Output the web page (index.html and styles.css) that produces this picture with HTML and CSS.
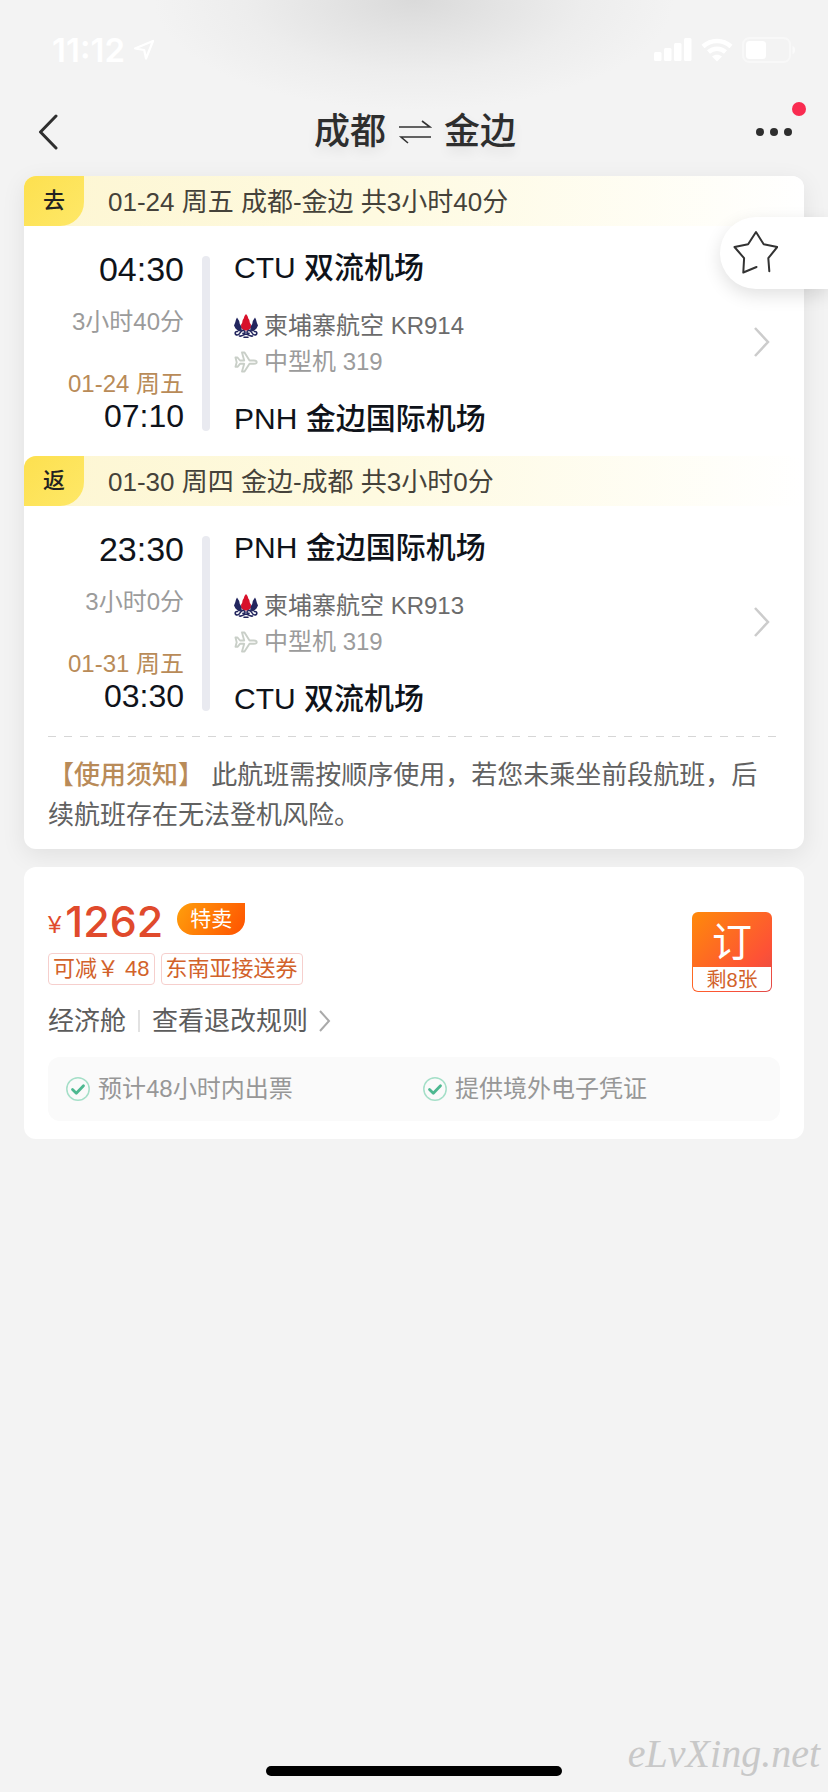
FILE: index.html
```html
<!DOCTYPE html>
<html lang="zh-CN">
<head>
<meta charset="utf-8">
<meta name="viewport" content="width=device-width">
<title>成都 - 金边</title>
<link rel="stylesheet" href="styles.css">
</head>
<body>
<svg class="defs" width="0" height="0" aria-hidden="true">
  <symbol id="airline" viewBox="0 0 24 24">
    <path fill="#d8102a" d="M12 0l1.500 2 .8 2.400 1 1.600.6 3 1 1.500v3.500L14 16.500h-4L7.100 14v-3.500l1-1.500.6-3 1-1.600L10.500 2z"/>
    <path fill="#23265f" d="M3 3.500L5.200 7l.6 3 1.300 2 .8 4.500-3 1L1.500 14.500 0 11.500 1.200 8.500 2 5.500zM21 3.500L18.800 7l-.6 3-1.300 2-.8 4.500 3 1 3.400-3 1.500-3-1.200-3L22 5.500z"/>
    <path fill="none" stroke="#23265f" stroke-width="1.600" stroke-linecap="round" d="M3.500 17.500c-3-.5-3 3.500-.3 3.500 3.800 0 2.500-5.500 6.300-4.500 2.500.8 1.500 3.500-.5 2.800M20.500 17.500c3-.5 3 3.500.3 3.500-3.800 0-2.500-5.500-6.300-4.500-2.500.8-1.500 3.500.5 2.800M5.500 22c3 .8 4-2 6.500-1.700 2.500-.3 3.500 2.500 6.500 1.700M10 23.200h4"/>
  </symbol>
  <symbol id="plane" viewBox="0 0 24 24">
    <path fill="none" stroke="#c9cfc8" stroke-width="1.900" stroke-linejoin="round" d="M1.500 7.500h2L6 10.500h4.200L8 2.500h2.500L15.500 10.500H20c3.600.3 3.600 3 0 3.300h-4.500L10.500 21.500H8l2.200-7.700H6l-2.500 3h-2l1.200-4.600z"/>
  </symbol>
  <symbol id="check" viewBox="0 0 24 24">
    <circle cx="12" cy="12" r="11.200" fill="none" stroke="#a5dfc8" stroke-width="1.500"/>
    <path fill="none" stroke="#4db890" stroke-width="2.800" stroke-linecap="round" stroke-linejoin="round" d="M6.500 12.500l3.800 3.800 7.200-7.600"/>
  </symbol>
</svg>

<header class="top">
  <div class="status">
    <div class="status-time">
      <span>11:12</span>
      <svg width="22" height="22" viewBox="0 0 22 22"><path fill="none" stroke="#fff" stroke-width="2.200" stroke-linejoin="round" d="M2 9.500L20 2l-7 17.500-1.800-8.500z"/></svg>
    </div>
    <div class="status-icons">
      <svg width="38" height="24" viewBox="0 0 38 24" fill="#fff"><rect y="14" width="7.500" height="9" rx="1.500"/><rect x="10" y="10" width="7.500" height="13" rx="1.500"/><rect x="20" y="5" width="7.500" height="18" rx="1.500"/><rect x="30" width="7.500" height="23" rx="1.500"/></svg>
      <svg width="32" height="24" viewBox="0 0 32 24" fill="none" stroke="#fff" stroke-width="4.500"><path d="M2 8.500c8-7.500 20-7.500 28 0M7.500 14c5-4.500 12-4.500 17 0"/><path fill="#fff" stroke="none" d="M16 23.500l-5-5c3-2.500 7-2.500 10 0z"/></svg>
      <svg width="54" height="26" viewBox="0 0 54 26"><rect x="1" y="1" width="47" height="24" rx="6.500" fill="none" stroke="#f8f8f8" stroke-width="2"/><rect x="4" y="4" width="20" height="18" rx="3.500" fill="#fff"/><path fill="#fafafa" d="M50.500 9c3.500 1 3.500 7 0 8z"/></svg>
    </div>
  </div>
  <nav class="nav">
    <button class="icon-button" aria-label="返回"><svg width="20" height="36" viewBox="0 0 20 36"><path fill="none" stroke="#2e2e2e" stroke-width="3" stroke-linecap="round" stroke-linejoin="round" d="M18 2L2.500 18 18 34"/></svg></button>
    <h1 class="title"><span>成都</span>
      <svg width="34" height="24" viewBox="0 0 34 24"><path fill="none" stroke="#333" stroke-width="1.600" d="M1 7h31L24 1M33 17H3l7 6"/></svg>
      <span>金边</span></h1>
    <button class="icon-button more" aria-label="更多"><svg width="36" height="8" viewBox="0 0 36 8" fill="#2e2e2e"><circle cx="4" cy="4" r="4"/><circle cx="18" cy="4" r="4"/><circle cx="32" cy="4" r="4"/></svg><span class="dot"></span></button>
  </nav>
</header>

<button class="favorite" aria-label="收藏"><svg width="46" height="46" viewBox="0 0 46 46"><path fill="none" stroke="#333" stroke-width="2" stroke-linecap="round" stroke-linejoin="round" d="M24.500 37L11.300 42.500l.8-14.300L2.500 17l13.600-2.700L24 2l7.700 12.300 13.600 2.700-9 11.200 1 13"/></svg></button>

<main class="content">
  <section class="card trip">
    <article>
      <h2 class="leg-head"><span class="tag">去</span><span class="summary">01-24 周五 成都-金边 共3小时40分</span></h2>
      <a class="leg" href="#outbound">
        <div class="times"><strong class="depart">04:30</strong><span class="duration">3小时40分</span><span class="date">01-24 周五</span><span class="arrive">07:10</span></div>
        <div class="rail"></div>
        <div class="places">
          <strong class="airport">CTU 双流机场</strong>
          <div class="flight"><p class="airline"><svg><use href="#airline"/></svg>柬埔寨航空 KR914</p><p class="plane"><svg><use href="#plane"/></svg>中型机 319</p></div>
          <strong class="airport">PNH 金边国际机场</strong>
        </div>
        <svg class="chevron" width="16" height="32" viewBox="0 0 16 32"><path fill="none" stroke="#ccc" stroke-width="2.500" d="M1 2l13 14L1 30"/></svg>
      </a>
    </article>
    <article>
      <h2 class="leg-head"><span class="tag">返</span><span class="summary">01-30 周四 金边-成都 共3小时0分</span></h2>
      <a class="leg" href="#return">
        <div class="times"><strong class="depart">23:30</strong><span class="duration">3小时0分</span><span class="date">01-31 周五</span><span class="arrive">03:30</span></div>
        <div class="rail"></div>
        <div class="places">
          <strong class="airport">PNH 金边国际机场</strong>
          <div class="flight"><p class="airline"><svg><use href="#airline"/></svg>柬埔寨航空 KR913</p><p class="plane"><svg><use href="#plane"/></svg>中型机 319</p></div>
          <strong class="airport">CTU 双流机场</strong>
        </div>
        <svg class="chevron" width="16" height="32" viewBox="0 0 16 32"><path fill="none" stroke="#ccc" stroke-width="2.500" d="M1 2l13 14L1 30"/></svg>
      </a>
    </article>
    <div class="divider"></div>
    <p class="notice"><strong>【使用须知】</strong> 此航班需按顺序使用，若您未乘坐前段航班，后续航班存在无法登机风险。</p>
  </section>

  <section class="card offer">
    <div class="offer-main">
      <div>
        <div class="price"><span class="currency">¥</span><span class="amount">1262</span><span class="sale">特卖</span></div>
        <div class="coupons"><span>可减￥ 48</span><span>东南亚接送券</span></div>
        <div class="cabin"><span>经济舱</span><i></i><a href="#rules">查看退改规则<svg width="12" height="22" viewBox="0 0 12 22"><path fill="none" stroke="#aaa" stroke-width="2" d="M1 1l9 10-9 10"/></svg></a></div>
      </div>
      <button class="book"><span class="book-label">订</span><span class="book-left">剩8张</span></button>
    </div>
    <ul class="services">
      <li><svg><use href="#check"/></svg>预计48小时内出票</li>
      <li><svg><use href="#check"/></svg>提供境外电子凭证</li>
    </ul>
  </section>
</main>

<footer class="bottom">
  <div class="home-bar"></div>
  <span class="watermark">eLvXing.net</span>
</footer>
</body>
</html>
```

FILE: styles.css
```css
* {
  box-sizing: border-box;
  margin: 0;
  padding: 0;
}

body {
  position: relative;
  display: flex;
  flex-direction: column;
  min-height: 100vh;
  background: #f3f3f3;
  color: #0f131a;
  font-family: "Liberation Sans", "Noto Sans CJK SC", sans-serif;
}

button {
  border: 0;
  background: none;
  font-family: inherit;
}

a {
  color: inherit;
  text-decoration: none;
}

.defs {
  position: absolute;
}

.top {
  background: radial-gradient(ellipse 260px 110px at 50% 0, #dadada 0%, #e3e3e3 30%, #ededed 65%, #f3f3f3 100%);
}

.status {
  display: flex;
  align-items: center;
  justify-content: space-between;
  height: 88px;
  padding: 12px 32px 0 52px;
  color: #fff;
}

.status-time {
  display: flex;
  align-items: center;
  gap: 8px;
  font: 600 33px/36px Inter, sans-serif;
}

.status-icons {
  display: flex;
  align-items: center;
  gap: 9px;
}

.nav {
  display: grid;
  grid-template-columns: 1fr auto 1fr;
  align-items: center;
  height: 88px;
  padding: 0 36px 0 38px;
}

.icon-button {
  display: flex;
  align-items: center;
  justify-self: start;
  height: 44px;
}

.more {
  position: relative;
  justify-self: end;
}

.dot {
  position: absolute;
  top: -8px;
  right: -14px;
  width: 14px;
  height: 14px;
  border-radius: 50%;
  background: #f92b50;
}

.title {
  display: flex;
  align-items: center;
  gap: 12px;
  color: #2e2e2e;
  font-size: 36px;
  font-weight: 500;
  line-height: 44px;
  text-shadow: 0 6px 12px rgba(0, 0, 0, 0.08);
}

.favorite {
  position: absolute;
  top: 217px;
  right: 0;
  width: 108px;
  height: 72px;
  padding: 0 0 0 12px;
  border-radius: 36px 0 0 36px;
  background: #fff;
  box-shadow: 0 6px 18px rgba(0, 0, 0, 0.12);
  text-align: left;
}

.favorite svg {
  display: block;
}

.content {
  display: flex;
  flex-direction: column;
  gap: 18px;
  padding: 0 24px;
}

.card {
  border-radius: 12px;
  background: #fff;
}

.trip {
  padding-bottom: 14px;
  box-shadow: 0 6px 24px rgba(0, 0, 0, 0.08);
}

.leg-head {
  display: flex;
  align-items: center;
  gap: 24px;
  height: 50px;
  border-radius: 12px 12px 0 0;
  background: linear-gradient(90deg, #fdf6d2 0%, #fefae0 45%, #fff 100%);
  color: #45423a;
  font-size: 26px;
  font-weight: 400;
  line-height: 50px;
}

.summary {
  padding-top: 2px;
}

.tag {
  width: 60px;
  border-radius: 12px 0 24px 0;
  background: linear-gradient(135deg, #fde04f, #fee868);
  color: #222;
  font-size: 22px;
  font-weight: 500;
  text-align: center;
}

.leg {
  display: grid;
  grid-template-columns: 160px 8px 1fr auto;
  column-gap: 18px;
  padding: 30px 34px 25px 0;
}

.times {
  display: flex;
  flex-direction: column;
  text-align: right;
  font-size: 24px;
}

.depart {
  font-size: 34px;
  font-weight: 400;
  line-height: 26px;
}

.duration {
  margin-top: 24px;
  color: #9b9b9b;
  line-height: 32px;
}

.date {
  margin-top: 31px;
  color: #b98b58;
  line-height: 30px;
}

.arrive {
  margin-top: 2px;
  font-size: 32px;
  line-height: 30px;
}

.rail {
  border-radius: 4px;
  background: #e9eaf0;
}

.places {
  display: flex;
  flex-direction: column;
  justify-content: space-between;
  padding-left: 6px;
}

.airport {
  font-size: 30px;
  font-weight: 500;
  line-height: 24px;
}

.flight {
  font-size: 24px;
  line-height: 36px;
}

.airline,
.plane {
  display: flex;
  align-items: center;
  gap: 6px;
}

.flight svg,
.services svg {
  width: 24px;
  height: 24px;
}

.airline {
  color: #6b6b6b;
}

.plane {
  color: #9b9b9b;
}

.chevron {
  align-self: center;
  margin-bottom: 4px;
}

.divider {
  height: 1px;
  margin: 0 24px 18px;
  background: repeating-linear-gradient(90deg, #d6d6d6 0 8px, transparent 8px 16px);
}

.notice {
  padding: 0 24px;
  color: #616161;
  font-size: 26px;
  line-height: 40px;
}

.notice strong {
  color: #b98b58;
  font-weight: 500;
}

.offer {
  padding: 24px 24px 18px;
}

.offer-main {
  display: flex;
  justify-content: space-between;
  padding-right: 8px;
}

.price {
  display: flex;
  align-items: center;
  height: 56px;
  color: #e04a2c;
}

.currency {
  padding-top: 12px;
  font-size: 24px;
  line-height: 32px;
}

.amount {
  margin: 0 14px 0 4px;
  padding-top: 4px;
  font: 500 43px/56px Inter, sans-serif;
}

.sale {
  width: 68px;
  border-radius: 16px 0 16px 16px;
  background: linear-gradient(120deg, #ff9f0c, #ff5200);
  color: #fff;
  font-size: 21px;
  line-height: 32px;
  text-align: center;
}

.coupons {
  display: flex;
  gap: 6px;
  margin-top: 6px;
  color: #d2622a;
  font-size: 22px;
  line-height: 30px;
}

.coupons span {
  padding: 0 4px;
  border: 1px solid #f6cfcd;
  border-radius: 4px;
}

.cabin {
  display: flex;
  align-items: center;
  gap: 12px;
  margin-top: 16px;
  color: #5c5c5c;
  font-size: 26px;
  line-height: 40px;
}

.cabin i {
  width: 2px;
  height: 22px;
  background: #e2e2e2;
}

.cabin a {
  display: flex;
  align-items: center;
  gap: 11px;
}

.book {
  display: flex;
  flex-direction: column;
  width: 80px;
  height: 80px;
  margin-top: 21px;
  padding: 0 1px 1px;
  border-radius: 6px;
  background: linear-gradient(135deg, #ff8a0a, #fd5236 70%, #e04a4a);
}

.book-label {
  width: 100%;
  height: 55px;
  color: #fff;
  font-size: 40px;
  line-height: 60px;
}

.book-left {
  width: 100%;
  height: 24px;
  border-radius: 0 0 5px 5px;
  background: #fff;
  color: #d2622a;
  font-size: 20px;
  line-height: 26px;
}

.services {
  display: grid;
  grid-template-columns: 1fr 1fr;
  margin-top: 16px;
  padding-left: 18px;
  border-radius: 12px;
  background: #fafafa;
  color: #979797;
  font-size: 24px;
  line-height: 64px;
  list-style: none;
}

.services li {
  display: flex;
  align-items: center;
  gap: 8px;
}

.bottom {
  display: grid;
  grid-template-columns: 1fr 296px 1fr;
  align-items: end;
  margin-top: auto;
  padding-bottom: 16px;
}

.home-bar {
  grid-column: 2;
  height: 10px;
  border-radius: 5px;
  background: #000;
}

.watermark {
  justify-self: end;
  padding-right: 8px;
  color: #c8c8c8;
  font: italic 40px/44px "Liberation Serif", serif;
}
```
